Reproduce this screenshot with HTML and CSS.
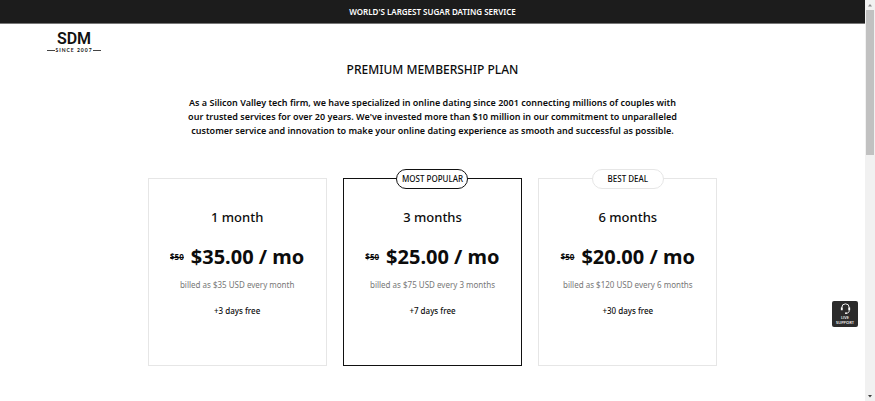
FILE: index.html
```html
<!DOCTYPE html>
<html lang="en">
<head>
<meta charset="utf-8">
<title>Premium Membership Plan</title>
<link rel="stylesheet" href="styles.css">
</head>
<body>
<div class="page">
  <header>
    <p class="banner">WORLD'S LARGEST SUGAR DATING SERVICE</p>
    <a class="logo" href="#" aria-label="SDM since 2007">
      <span class="logo-name">SDM</span>
      <span class="logo-since">SINCE 2007</span>
    </a>
  </header>
  <main>
    <h1>PREMIUM MEMBERSHIP PLAN</h1>
    <p class="intro">As a Silicon Valley tech firm, we have specialized in online dating since 2001 connecting millions of couples with<br>our trusted services for over 20 years. We've invested more than $10 million in our commitment to unparalleled<br>customer service and innovation to make your online dating experience as smooth and successful as possible.</p>
    <section class="plans">
      <article class="plan">
        <h2>1 month</h2>
        <p class="price"><s>$50</s><strong>$35.00 / mo</strong></p>
        <p class="billed">billed as $35 USD every month</p>
        <p class="bonus">+3 days free</p>
      </article>
      <article class="plan popular">
        <span class="tag">MOST POPULAR</span>
        <h2>3 months</h2>
        <p class="price"><s>$50</s><strong>$25.00 / mo</strong></p>
        <p class="billed">billed as $75 USD every 3 months</p>
        <p class="bonus">+7 days free</p>
      </article>
      <article class="plan">
        <span class="tag">BEST DEAL</span>
        <h2>6 months</h2>
        <p class="price"><s>$50</s><strong>$20.00 / mo</strong></p>
        <p class="billed">billed as $120 USD every 6 months</p>
        <p class="bonus">+30 days free</p>
      </article>
    </section>
  </main>
  <button class="support" type="button">
    <svg viewBox="0 0 14 14" fill="none" stroke="#fff" aria-hidden="true">
      <path d="M3 7V6a4 4 0 0 1 8 0v1M11 9c0 2-1 3-3 3"/>
      <path d="M3 6v3M11 6v3" stroke-width="2"/>
      <circle cx="7.500" cy="12" r="1" fill="#fff" stroke="none"/>
    </svg>
    <span>LIVE<br>SUPPORT</span>
  </button>
</div>
<div class="scrollbar" aria-hidden="true">
  <svg viewBox="0 0 10 10"><path d="M3 6.500 5 4l2 2.500z" fill="#8a8a8a"/></svg>
  <div class="track"><div class="thumb"></div></div>
  <svg viewBox="0 0 10 10"><path d="M3 4l2 2.500L7 4z" fill="#404040"/></svg>
</div>
</body>
</html>
```
FILE: styles.css
```css
* { box-sizing: border-box; }
body {
  margin: 0;
  display: grid;
  grid-template-columns: 1fr 10px;
  height: 100vh;
  overflow: hidden;
  background: #fff;
  color: #0c0c0c;
  font-family: "Noto Sans", "Open Sans", sans-serif;
}
h1, h2, p { margin: 0; }
.page { min-width: 0; text-align: center; }
.banner {
  background: #1c1c1c;
  border-bottom: 1px solid #777;
  color: #fff;
  font-size: 8px;
  font-weight: 600;
  line-height: 23px;
}
.logo {
  display: inline-flex;
  flex-direction: column;
  align-items: center;
  float: left;
  width: 54px;
  margin: 7px 0 0 47px;
  color: #111;
  text-decoration: none;
  font-family: Lato, sans-serif;
}
.logo-name {
  font-family: Roboto, sans-serif;
  font-size: 16px;
  font-weight: 600;
  line-height: 16px;
}
.logo-since {
  display: flex;
  align-items: center;
  align-self: stretch;
  font-size: 5px;
  font-weight: 700;
  line-height: 7px;
  letter-spacing: 1px;
  white-space: nowrap;
}
.logo-since::before, .logo-since::after {
  content: "";
  flex: 1;
  height: 1px;
  background: #444;
}
main {
  clear: both;
  padding-top: 6px;
}
h1 {
  font-size: 12px;
  font-weight: 500;
  line-height: 20px;
}
.intro {
  margin-top: 16px;
  font-size: 9px;
  font-weight: 600;
  line-height: 14px;
}
.plans {
  display: grid;
  grid-template-columns: repeat(3, 1fr);
  gap: 16px;
  max-width: 570px;
  margin: 40px auto 0;
}
.plan {
  position: relative;
  min-height: 188px;
  padding: 28px 0 40px;
  border: 1px solid #e6e6e6;
  white-space: nowrap;
}
.popular { border-color: #111; }
.tag {
  position: absolute;
  top: -10px;
  left: 50%;
  width: 72px;
  margin-left: -36px;
  border: 1px solid #e6e6e6;
  border-radius: 10px;
  background: #fff;
  font-size: 8px;
  font-weight: 500;
  line-height: 18px;
}
.popular .tag { border-color: #111; }
h2 {
  font-size: 13px;
  font-weight: 500;
  line-height: 20px;
}
.price {
  display: flex;
  justify-content: center;
  align-items: center;
  gap: 7px;
  margin-top: 16px;
  line-height: 28px;
}
.price s { font-size: 8px; font-weight: 700; }
.price strong { font-size: 20px; font-weight: 700; }
.billed {
  margin-top: 7px;
  color: #777;
  font-size: 8px;
  line-height: 14px;
}
.bonus {
  margin-top: 12px;
  font-size: 8px;
  font-weight: 500;
  line-height: 14px;
}
.support {
  position: fixed;
  right: 17px;
  bottom: 74px;
  display: flex;
  flex-direction: column;
  align-items: center;
  width: 26px;
  height: 26px;
  padding: 1px 0 0;
  border: 0;
  border-radius: 2px;
  background: #2b2b2b;
  color: #fff;
  font: 600 4px/5px "Open Sans", sans-serif;
}
.support svg { width: 13px; height: 13px; }
.scrollbar {
  display: flex;
  flex-direction: column;
  background: #f1f1f1;
}
.scrollbar svg { width: 10px; height: 10px; }
.track { flex: 1; padding: 0 1px; }
.thumb { height: 38%; background: #c1c1c1; }
```
